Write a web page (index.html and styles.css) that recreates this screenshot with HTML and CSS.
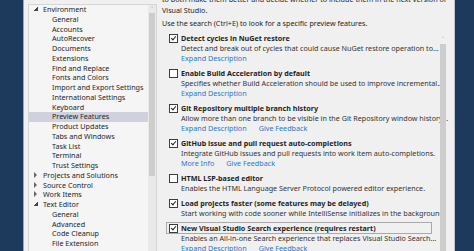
FILE: index.html
```html
<!DOCTYPE html>
<html lang="en">
<head>
  <meta charset="UTF-8" />
  <title>Options - Preview Features</title>
  <link rel="stylesheet" href="styles.css">
</head>
<body>
  <div class="edge"></div>
  <div class="dialog">
    <div class="tree">
      <ul class="tree-list">
        <li class="node"><span class="arrow open"></span>Environment</li>
        <li class="leaf">General</li>
        <li class="leaf">Accounts</li>
        <li class="leaf">AutoRecover</li>
        <li class="leaf">Documents</li>
        <li class="leaf">Extensions</li>
        <li class="leaf">Find and Replace</li>
        <li class="leaf">Fonts and Colors</li>
        <li class="leaf">Import and Export Settings</li>
        <li class="leaf">International Settings</li>
        <li class="leaf">Keyboard</li>
        <li class="leaf selected">Preview Features</li>
        <li class="leaf">Product Updates</li>
        <li class="leaf">Tabs and Windows</li>
        <li class="leaf">Task List</li>
        <li class="leaf">Terminal</li>
        <li class="leaf">Trust Settings</li>
        <li class="node"><span class="arrow closed"></span>Projects and Solutions</li>
        <li class="node"><span class="arrow closed"></span>Source Control</li>
        <li class="node"><span class="arrow closed"></span>Work Items</li>
        <li class="node"><span class="arrow open"></span>Text Editor</li>
        <li class="leaf">General</li>
        <li class="leaf">Advanced</li>
        <li class="leaf">Code Cleanup</li>
        <li class="leaf">File Extension</li>
      </ul>
      <div class="scrollbar tree-scroll">
        <span class="up">&#708;</span>
        <div class="thumb"></div>
      </div>
    </div>

    <div class="content">
      <p class="intro">to both make them better and decide whether to include them in the next version of<br>Visual Studio.</p>
      <p class="intro">Use the search (Ctrl+E) to look for a specific preview features.</p>

      <div class="features">
        <div class="feature-list">
          <div class="feature">
            <div class="title"><span class="check on"></span>Detect cycles in NuGet restore</div>
            <div class="desc">Detect and break out of cycles that could cause NuGet restore operation to...</div>
            <div class="links"><a>Expand Description</a></div>
          </div>
          <div class="feature">
            <div class="title"><span class="check"></span>Enable Build Acceleration by default</div>
            <div class="desc">Specifies whether Build Acceleration should be used to improve incremental...</div>
            <div class="links"><a>Expand Description</a></div>
          </div>
          <div class="feature">
            <div class="title"><span class="check on"></span>Git Repository multiple branch history</div>
            <div class="desc">Allow more than one branch to be visible in the Git Repository window history...</div>
            <div class="links"><a>Expand Description</a><a>Give Feedback</a></div>
          </div>
          <div class="feature">
            <div class="title"><span class="check on"></span>GitHub issue and pull request auto-completions</div>
            <div class="desc">Integrate GitHub issues and pull requests into work item auto-completions.</div>
            <div class="links"><a>More Info</a><a>Give Feedback</a></div>
          </div>
          <div class="feature">
            <div class="title"><span class="check"></span>HTML LSP-based editor</div>
            <div class="desc">Enables the HTML Language Server Protocol powered editor experience.</div>
          </div>
          <div class="feature">
            <div class="title"><span class="check on"></span>Load projects faster (some features may be delayed)</div>
            <div class="desc">Start working with code sooner while IntelliSense initializes in the background.</div>
          </div>
          <div class="feature">
            <div class="title focused"><span class="check on"></span>New Visual Studio Search experience (requires restart)</div>
            <div class="desc">Enables an All-in-one Search experience that replaces Visual Studio Search...</div>
            <div class="links"><a>Expand Description</a><a>Give Feedback</a></div>
          </div>
        </div>
        <div class="scrollbar list-scroll">
          <span class="up">&#708;</span>
          <div class="thumb"></div>
        </div>
      </div>
    </div>
  </div>
  <div class="edge right"></div>
</body>
</html>
```

FILE: styles.css
```css
body {
  margin: 0;
  height: 251px;
  overflow: hidden;
  display: flex;
  background-color: #1d3a5c;
  font-family: 'Noto Sans', 'Open Sans', sans-serif;
  font-size: 7.2px;
  color: #1e1e1e;
}
.edge {
  width: 23px;
  flex: none;
  background-color: #1d3a5c;
}
.edge.right {
  width: 19px;
}
.dialog {
  flex: 1;
  display: flex;
  align-items: flex-start;
  background-color: #f0f0f0;
  border-left: 1px solid #9aa7b6;
  border-right: 1px solid #b9c3cf;
  padding: 4px 0 0 4px;
  min-width: 0;
}

/* tree */
.tree {
  width: 127px;
  height: 260px;
  flex: none;
  display: flex;
  background-color: #f5f5f5;
  border: 1px solid #d6d6d6;
}
.tree-list {
  list-style: none;
  margin: 0;
  padding: 0;
  flex: 1;
}
.tree-list li {
  height: 9.75px;
  line-height: 9.75px;
  white-space: nowrap;
}
.node {
  padding-left: 5px;
}
.leaf {
  padding-left: 23px;
}
.selected {
  background-color: #cfd2dc;
}
.arrow {
  display: inline-block;
  width: 4px;
  height: 4px;
  margin-right: 5px;
  vertical-align: 1px;
}
.arrow.open {
  background: linear-gradient(135deg, transparent 50%, #444 50%);
}
.arrow.closed {
  width: 0;
  height: 0;
  border-left: 3px solid #666;
  border-top: 3px solid transparent;
  border-bottom: 3px solid transparent;
  margin-right: 6px;
  vertical-align: 0;
}

/* scrollbars */
.scrollbar {
  width: 8px;
  flex: none;
  display: flex;
  flex-direction: column;
  align-items: center;
  background-color: #e9e9e9;
}
.scrollbar .up {
  font-size: 6px;
  line-height: 8px;
  color: #777;
}
.scrollbar .thumb {
  width: 6px;
  background-color: #cdcdcd;
}
.tree-scroll .thumb {
  height: 163px;
}
.list-scroll {
  margin-left: 8px;
  height: 230px;
  padding-top: 3px;
  background-color: transparent;
}
.list-scroll .thumb {
  height: 220px;
  margin-top: 1px;
}

/* right content */
.content {
  flex: 1;
  margin: -10px 0 0 5px;
  min-width: 0;
}
.intro {
  margin: 0 0 2.5px;
  line-height: 10.5px;
  white-space: nowrap;
}
.features {
  display: flex;
  margin-top: 4px;
  padding-right: 7px;
}
.feature-list {
  flex: 1;
  padding: 1px 0 0 7px;
  min-width: 0;
}
.feature {
  margin-bottom: 5px;
  line-height: 10px;
  white-space: nowrap;
}
.title {
  font-weight: bold;
  display: flex;
  align-items: center;
}
.title.focused {
  outline: 1px solid #a9a9a9;
  outline-offset: 0;
  margin-left: -2px;
  padding-left: 2px;
}
.desc,
.links {
  padding-left: 12px;
  color: #333;
}
.links a {
  color: #2a78c8;
  margin-right: 12px;
}
.check {
  width: 7px;
  height: 7px;
  border: 1px solid #3c3c3c;
  background-color: #fff;
  margin-right: 3px;
  flex: none;
  position: relative;
}
.check.on::after {
  content: "";
  position: absolute;
  left: 2px;
  top: 0;
  width: 2px;
  height: 4px;
  border-right: 1px solid #222;
  border-bottom: 1px solid #222;
  transform: rotate(40deg);
}
```
